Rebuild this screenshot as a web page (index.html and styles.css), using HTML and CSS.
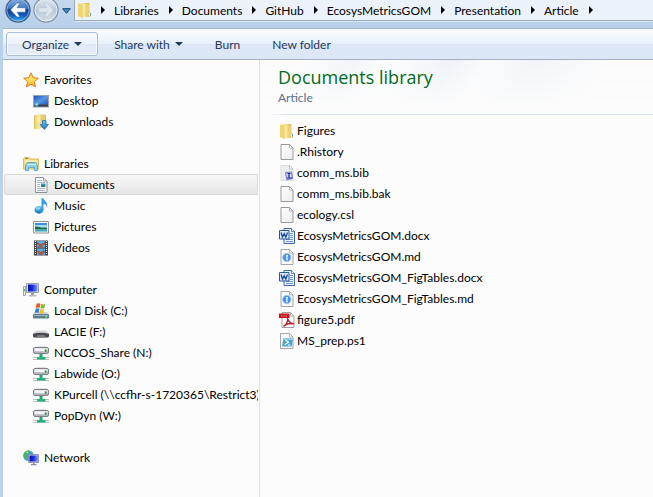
FILE: index.html
```html
<!DOCTYPE html>
<html lang="en">
<head>
<meta charset="utf-8">
<title>Documents library</title>
<link rel="stylesheet" href="styles.css">
</head>
<body>
<svg class="defs" aria-hidden="true">
  <defs>
    <linearGradient id="g-folder" x1="0" y1="0" x2="1" y2="0"><stop offset="0" stop-color="#eccf68"/><stop offset=".6" stop-color="#f7e694"/><stop offset="1" stop-color="#f2dc84"/></linearGradient>
    <linearGradient id="g-blue" x1="0" y1="0" x2="0" y2="1"><stop offset="0" stop-color="#6fc6f3"/><stop offset="1" stop-color="#1474bd"/></linearGradient>
    <linearGradient id="g-star" x1="0" y1="0" x2="0" y2="1"><stop offset="0" stop-color="#ffd27a"/><stop offset=".5" stop-color="#ffe45e"/><stop offset="1" stop-color="#f6a12c"/></linearGradient>
    <linearGradient id="g-desk" x1="0" y1="0" x2="1" y2="1"><stop offset="0" stop-color="#1f4fb0"/><stop offset=".5" stop-color="#5b97e6"/><stop offset="1" stop-color="#2458bd"/></linearGradient>
    <linearGradient id="g-screen" x1="0" y1="0" x2="1" y2="0"><stop offset="0" stop-color="#0a0fa8"/><stop offset=".5" stop-color="#1d2fe0"/><stop offset="1" stop-color="#7fa2f4"/></linearGradient>
    <linearGradient id="g-metal" x1="0" y1="0" x2="0" y2="1"><stop offset="0" stop-color="#f2f2f4"/><stop offset="1" stop-color="#a9abb2"/></linearGradient>
    <linearGradient id="g-page" x1="0" y1="0" x2="1" y2="1"><stop offset="0" stop-color="#ffffff"/><stop offset="1" stop-color="#ececec"/></linearGradient>
    <linearGradient id="g-back" x1="0" y1="0" x2="0" y2="1"><stop offset="0" stop-color="#8db4e2"/><stop offset=".42" stop-color="#3f77c4"/><stop offset=".5" stop-color="#0c3c94"/><stop offset=".75" stop-color="#1560c0"/><stop offset="1" stop-color="#3fc5f8"/></linearGradient>
    <linearGradient id="g-fwd" x1="0" y1="0" x2="0" y2="1"><stop offset="0" stop-color="#e4ebf3"/><stop offset=".5" stop-color="#b9c8d9"/><stop offset="1" stop-color="#d5e0ec"/></linearGradient>
  </defs>

  <symbol id="i-folder" viewBox="0 0 16 16">
    <path d="M1 1.500h5v13.800l-5-.8z" fill="#efd673"/>
    <path d="M6 1h6.500v9l1.500.800V14l-1 .800H6z" fill="#e2c45e"/>
    <path d="M4 3l4-2v13.500L5.500 16 4 15.500z" fill="url(#g-folder)"/><path d="M7.500 1.500h1v13l-1 .6z" fill="#f9efb4"/>
    <path d="M9 2.500h3v11H9z" fill="#ead379"/><path d="M12 11h1v3h-1z" fill="#fbf6d8"/><path d="M13 11h1v2.500h-1z" fill="#5fa5cf"/>
  </symbol>
  <symbol id="i-star" viewBox="0 0 16 16">
    <path d="M8 .8l2.100 4.900 5.200.5-3.900 3.500 1.200 5.200L8 12.200l-4.600 2.700 1.200-5.200L.7 6.200l5.200-.5z" fill="url(#g-star)" stroke="#e07a1c" stroke-linejoin="round"/>
  </symbol>
  <symbol id="i-desktop" viewBox="0 0 16 16">
    <path d="M0 2h16v12.500H0z" fill="#9aa5b4"/><path d="M1 3h14v8.500H1z" fill="url(#g-desk)"/>
    <path d="M1 11.500h14v2H1z" fill="#20242e"/><path d="M6 11.500h9v1H6z" fill="#4b5a70"/>
    <circle cx="3.500" cy="11.500" r="2.200" fill="#3ba3e8"/><path d="M2.500 11h1v-1h1v2h-2z" fill="#f7e06a"/>
  </symbol>
  <symbol id="i-downloads" viewBox="0 0 16 16">
    <path d="M1 1h6v14H1z" fill="#f0da7e"/><path d="M1 1h1v14H1z" fill="#d9bf6a"/>
    <path d="M6 .5h7V14H6z" fill="#e6cd74"/><path d="M12 1h1v13h-1z" fill="#d9bd62"/>
    <path d="M4 3L7.500 .5v14.500L5 16z" fill="#f7e9a4"/>
    <path d="M9.500 6.500h3.500v4h2.500L11.300 15.500 7 10.500h2.500z" fill="url(#g-blue)" stroke="#1d72b8" stroke-width=".8"/>
  </symbol>
  <symbol id="i-libraries" viewBox="0 0 16 16">
    <path d="M.5 2.500l1-1H6l1 1.500h8.500V13H.5z" fill="#f1dc84" stroke="#d3b24e" stroke-width=".8"/>
    <path d="M1.500 4.500h13v1h-13z" fill="#fff8cf"/><path d="M2 2h3v1H2z" fill="#45b649"/>
    <path d="M2.500 14.500V9.500L4.500 6.500h8l2 3v5h-3v-3H5.500v3z" fill="#8ed0ee" stroke="#4a9cc9" stroke-width=".8"/>
    <path d="M4 8.500h9" stroke="#d4f1fb"/>
  </symbol>
  <symbol id="i-documents" viewBox="0 0 16 16">
    <path d="M2.500.5h8l3.500 3.500v11.500H2.500z" fill="#fff" stroke="#8b8f94"/><path d="M10.500.5V4H14" fill="#e4e6e8" stroke="#8b8f94" stroke-width=".8"/>
    <path d="M4 3.500h5M4 5.500h8M4 7.500h3M4 9.500h3M4 11.500h8M4 13.500h8" stroke="#9db7d6"/>
    <path d="M8 6.500h4.500V10H8z" fill="#3f8fd6"/><path d="M8 9l2-1.200L12.500 10H8z" fill="#2e7d5b"/>
  </symbol>
  <symbol id="i-music" viewBox="0 0 16 16">
    <ellipse cx="6" cy="11.800" rx="4.500" ry="3.900" fill="url(#g-blue)"/>
    <path d="M8.500 12V.3h2c.4 2.700 4.700 3.700 3.700 9.200-.4-2.500-1.900-3.400-3.700-3.800V12z" fill="#3b9bd8"/>
    <ellipse cx="5" cy="10.500" rx="2.200" ry="1.300" fill="#8bd5f5"/>
  </symbol>
  <symbol id="i-pictures" viewBox="0 0 16 16">
    <path d="M.5 2.500h15v11.500H.5z" fill="#fff" stroke="#91979d"/><path d="M2 4h12v8.500H2z" fill="#a8dcf6"/>
    <path d="M2 4h12v2H2z" fill="#3f8edb"/><path d="M2 7.500c4 0 5 1.500 12 1v2H2z" fill="#1c6b4c"/><path d="M2 10.500h12v2H2z" fill="#48a8b4"/>
  </symbol>
  <symbol id="i-videos" viewBox="0 0 16 16">
    <path d="M1 .5h14v15H1z" fill="#3c3f45"/><path d="M4 1h8v6.500H4zM4 8.500h8V15H4z" fill="#5aaee6"/>
    <path d="M4 2l4 2 4-2v2.500L9 6l2 1.500H5L6 5l-2-.5zM4 10l4 2 3-2 1 2-3 3H6z" fill="#a25a4c"/>
    <path d="M2.500 1v14M13.500 1v14" stroke="#fff" stroke-width="1.200" stroke-dasharray="1 1"/>
  </symbol>
  <symbol id="i-computer" viewBox="0 0 16 16">
    <path d="M3.500 1.500h12v9h-12z" fill="#d9dce5" stroke="#9ba0ae"/><path d="M5 2.500h9.500v7H5z" fill="url(#g-screen)"/>
    <path d="M8 11h3v2H8z" fill="#9b9fa8"/><path d="M6 13h7.500v1.500H6z" fill="#b9bcc4"/>
    <path d="M.5 4.500h2v9h-2z" fill="#e8e9ec" stroke="#8d9099" stroke-width=".8"/><path d="M1 7h1v2H1z" fill="#4fc26b"/>
  </symbol>
  <symbol id="i-disk" viewBox="0 0 16 16">
    <path d="M2 9h12l2 2.500H0z" fill="#cdd2d7"/><rect y="11" width="16" height="4.500" rx="1" fill="#5b7d8c"/>
    <path d="M1 12h14v1H1z" fill="#9bb5bf"/><path d="M12.500 13h1.500v1.500h-1.500z" fill="#7af08a"/>
    <path d="M3.500.7C5-.2 6.300.1 7.500.7L6.700 5c-1.200-.6-2.600-.6-4 .2z" fill="#ea5a2c"/>
    <path d="M8.200.9c1.400.7 2.600.6 4-.1L11.400 5c-1.400.7-2.600.7-4 .2z" fill="#7cbb32"/>
    <path d="M2.500 5.900c1.500-.8 2.800-.7 4-.1L5.700 10c-1.200-.6-2.600-.6-4 .2z" fill="#3183d3"/>
    <path d="M7.200 6c1.400.7 2.600.6 4-.1l-.8 4.200c-1.400.7-2.600.7-4 .2z" fill="#f7bb28"/>
  </symbol>
  <symbol id="i-lacie" viewBox="0 0 16 16">
    <path d="M3 6.500h10l3 3.500H0z" fill="#d6d6d9"/><path d="M0 9.800Q8 7.800 16 9.800V12q0 1.500-1.500 1.500h-13Q0 13.500 0 12z" fill="#4a4a4e"/>
    <path d="M3 13.500L4.500 11h7l1.500 2.500z" fill="#77777c"/>
  </symbol>
  <symbol id="i-netdrive" viewBox="0 0 16 16">
    <path d="M3 1h10l2.500 3H.5z" fill="#e1e1e4"/><rect x=".5" y="2.500" width="15" height="6" rx="1.500" fill="url(#g-metal)" stroke="#7f8086"/>
    <path d="M2 4h9v2H2z" fill="#f6f6f8"/><path d="M12 4.500h1.500v2.500H12z" fill="#2da43a"/><path d="M6.500 9h3v3.500h-3z" fill="#1fa873"/>
    <path d="M0 12.500h16M0 14.500h16" stroke="#b9bebe"/><path d="M4 12h8.500v2.500H4z" fill="#23b47c"/>
  </symbol>
  <symbol id="i-network" viewBox="0 0 16 16">
    <circle cx="5.500" cy="5.800" r="5.300" fill="#3c9fe0"/><path d="M2 2c2-1.800 4-1.700 5-1L5 4 3 5 4 8 2.500 9.500C.2 7 0 4 2 2zM8 1.500l2.500 2L8 4z" fill="#46b84a"/>
    <path d="M3 2.500l2-1v2z" fill="#d3f0cf"/>
    <path d="M5.500 4.500h10v8h-10z" fill="#c8cee0" stroke="#7d86a8" stroke-width=".8"/><path d="M6.500 5.500H15v6H6.500z" fill="url(#g-screen)"/>
    <path d="M10 12.500h1.500V14H10zM8 14h5.500v1.200H8z" fill="#8c92a3"/>
  </symbol>
  <symbol id="i-file" viewBox="0 0 16 16">
    <path d="M2 .5h8.500L14 4v11.500H2z" fill="url(#g-page)" stroke="#9a9a9a"/><path d="M10.500.5V4H14z" fill="#fff" stroke="#9a9a9a" stroke-width=".8"/>
  </symbol>
  <symbol id="i-bib" viewBox="0 0 16 16">
    <path d="M2 .5h8.500L14 4v11.500H2z" fill="#eeeeef" stroke="#d4d4d4" stroke-width=".8"/><path d="M10.500.5V4H14z" fill="#fff" stroke="#b4b4b4" stroke-width=".8"/>
    <path d="M6.500 7.500l6-.5 1.200 6.500-6 1.300z" fill="#c9cff0" stroke="#5a63b4" stroke-width=".8"/>
    <path d="M8.500 8.500h3M10 8.500v4M8 13h5" stroke="#1e2a9c" stroke-width="1.200"/>
  </symbol>
  <symbol id="i-word" viewBox="0 0 16 16">
    <path d="M5 .5h7.500l3 3v12H5z" fill="#eef4fc" stroke="#3d66a8"/><path d="M12.500.5v3h3" fill="#fff" stroke="#3d66a8" stroke-width=".8"/>
    <path d="M11 5.500h3M11 7.500h3M11 9.500h3M7 11.500h7M7 13.500h7" stroke="#6f95cc"/>
    <path d="M.5 2.500h9.500v8.500H.5z" fill="#dfeafa" stroke="#2b569a"/>
    <path d="M2 4.500l1.500 4.700L5.200 5.500l1.600 3.700 1.700-4.700" fill="none" stroke="#1d4b9b" stroke-width="1.300"/>
  </symbol>
  <symbol id="i-md" viewBox="0 0 16 16">
    <path d="M2 .5h8.500L14 4v11.500H2z" fill="#fafafa" stroke="#a4a4a4"/><path d="M10.500.5V4H14z" fill="#fff" stroke="#a4a4a4" stroke-width=".8"/>
    <circle cx="7.800" cy="8.500" r="4.200" fill="#4a92e4" stroke="#a9cdf3"/><path d="M7 6h2v1l-.4.500v3H9v.8H6.900v-.8h.4v-3h-.3z" fill="#e8f3ff"/>
  </symbol>
  <symbol id="i-pdf" viewBox="0 0 16 16">
    <path d="M3 .5h8.500L15 4v11.500H3z" fill="#fbfafa" stroke="#a2a2a2"/><path d="M11.500.5V4H15z" fill="#fff" stroke="#a2a2a2" stroke-width=".8"/>
    <path d="M0 1.500h10.500v4.500H0z" fill="#c4161c"/><path d="M2 3.900h6" stroke="#e58a8a" stroke-dasharray="1.500 .8"/>
    <path d="M5 14c2-1 4.200-4.600 3.600-7.200C10 10 11.500 11.500 14.500 11.800 10.500 11 7.500 11.800 5 14z" fill="none" stroke="#b71c22" stroke-width="1.400" stroke-linejoin="round"/>
  </symbol>
  <symbol id="i-ps1" viewBox="0 0 16 16">
    <path d="M1.500.5h9L14 4v11.500H1.500z" fill="#f8f8f8" stroke="#a4a4a4"/><path d="M10.500.5V4H14z" fill="#fff" stroke="#a4a4a4" stroke-width=".8"/>
    <path d="M4.500 5h9.500l-1.200 8.500H3z" fill="#4aa5cf"/><path d="M4.500 5h9.500l-.3 2H4.200z" fill="#8cd0e8"/>
    <path d="M6.500 7l3 2.300-3.700 2.500M9 12h2.500" fill="none" stroke="#fff" stroke-width="1.200"/>
  </symbol>
</svg>

<header class="address-row">
  <button class="round" aria-label="Back">
    <svg viewBox="0 0 26 26" aria-hidden="true"><circle cx="13" cy="13" r="12" fill="url(#g-back)" stroke="#47648c" stroke-width="1.400"/><circle cx="13" cy="13" r="11" fill="none" stroke="#a9d3f4" stroke-opacity=".55"/><path d="M5.500 13L12 6h3l-2.800 4.800h8.300v4.400h-8.300L15 20h-3z" fill="#fff" stroke="#2b5791" stroke-width=".5"/></svg>
  </button>
  <button class="round" aria-label="Forward">
    <svg viewBox="0 0 26 26" aria-hidden="true"><circle cx="13" cy="13" r="12" fill="url(#g-fwd)" stroke="#8798ac" stroke-width="1.400"/><circle cx="13" cy="13" r="11" fill="none" stroke="#eef4fa" stroke-opacity=".8"/><path d="M20.500 13L14 6h-3l2.800 4.800H5.500v4.400h8.300L11 20h3z" fill="#dde6ef" stroke="#b0becd" stroke-width=".5"/></svg>
  </button>
  <button class="recent" aria-label="Recent pages">
    <svg viewBox="0 0 9 6" aria-hidden="true"><path d="M.7.700h7.600L4.500 5.300z" fill="#3c8fce" stroke="#173f77"/></svg>
  </button>
  <nav class="address" aria-label="Address">
    <svg class="icon" aria-hidden="true"><use href="#i-folder"/></svg>
    <ol class="crumbs">
      <li><a href="#">Libraries</a></li>
      <li><a href="#">Documents</a></li>
      <li><a href="#">GitHub</a></li>
      <li><a href="#">EcosysMetricsGOM</a></li>
      <li><a href="#">Presentation</a></li>
      <li class="last"><a href="#">Article</a></li>
    </ol>
  </nav>
</header>

<div class="window">
  <div class="toolbar">
    <button class="tool tool-active">Organize <span class="caret"></span></button>
    <button class="tool">Share with <span class="caret"></span></button>
    <button class="tool">Burn</button>
    <button class="tool">New folder</button>
  </div>
  <div class="panes">
    <nav class="sidebar" aria-label="Navigation pane">
      <section class="group">
        <a class="row" href="#"><svg class="icon" aria-hidden="true"><use href="#i-star"/></svg><span>Favorites</span></a>
        <a class="row child" href="#"><svg class="icon" aria-hidden="true"><use href="#i-desktop"/></svg><span>Desktop</span></a>
        <a class="row child" href="#"><svg class="icon" aria-hidden="true"><use href="#i-downloads"/></svg><span>Downloads</span></a>
      </section>
      <section class="group">
        <a class="row" href="#"><svg class="icon" aria-hidden="true"><use href="#i-libraries"/></svg><span>Libraries</span></a>
        <a class="row child selected" href="#" aria-current="page"><svg class="icon" aria-hidden="true"><use href="#i-documents"/></svg><span>Documents</span></a>
        <a class="row child" href="#"><svg class="icon" aria-hidden="true"><use href="#i-music"/></svg><span>Music</span></a>
        <a class="row child" href="#"><svg class="icon" aria-hidden="true"><use href="#i-pictures"/></svg><span>Pictures</span></a>
        <a class="row child" href="#"><svg class="icon" aria-hidden="true"><use href="#i-videos"/></svg><span>Videos</span></a>
      </section>
      <section class="group">
        <a class="row" href="#"><svg class="icon" aria-hidden="true"><use href="#i-computer"/></svg><span>Computer</span></a>
        <a class="row child" href="#"><svg class="icon" aria-hidden="true"><use href="#i-disk"/></svg><span>Local Disk (C:)</span></a>
        <a class="row child" href="#"><svg class="icon" aria-hidden="true"><use href="#i-lacie"/></svg><span>LACIE (F:)</span></a>
        <a class="row child" href="#"><svg class="icon" aria-hidden="true"><use href="#i-netdrive"/></svg><span>NCCOS_Share (N:)</span></a>
        <a class="row child" href="#"><svg class="icon" aria-hidden="true"><use href="#i-netdrive"/></svg><span>Labwide (O:)</span></a>
        <a class="row child" href="#"><svg class="icon" aria-hidden="true"><use href="#i-netdrive"/></svg><span>KPurcell (\\ccfhr-s-1720365\Restrict3) (</span></a>
        <a class="row child" href="#"><svg class="icon" aria-hidden="true"><use href="#i-netdrive"/></svg><span>PopDyn (W:)</span></a>
      </section>
      <section class="group">
        <a class="row" href="#"><svg class="icon" aria-hidden="true"><use href="#i-network"/></svg><span>Network</span></a>
      </section>
    </nav>
    <main class="content">
      <div class="library-head">
        <h1>Documents library</h1>
        <p>Article</p>
      </div>
      <div class="files">
        <a class="file" href="#"><svg class="icon" aria-hidden="true"><use href="#i-folder"/></svg><span>Figures</span></a>
        <a class="file" href="#"><svg class="icon" aria-hidden="true"><use href="#i-file"/></svg><span>.Rhistory</span></a>
        <a class="file" href="#"><svg class="icon" aria-hidden="true"><use href="#i-bib"/></svg><span>comm_ms.bib</span></a>
        <a class="file" href="#"><svg class="icon" aria-hidden="true"><use href="#i-file"/></svg><span>comm_ms.bib.bak</span></a>
        <a class="file" href="#"><svg class="icon" aria-hidden="true"><use href="#i-file"/></svg><span>ecology.csl</span></a>
        <a class="file" href="#"><svg class="icon" aria-hidden="true"><use href="#i-word"/></svg><span>EcosysMetricsGOM.docx</span></a>
        <a class="file" href="#"><svg class="icon" aria-hidden="true"><use href="#i-md"/></svg><span>EcosysMetricsGOM.md</span></a>
        <a class="file" href="#"><svg class="icon" aria-hidden="true"><use href="#i-word"/></svg><span>EcosysMetricsGOM_FigTables.docx</span></a>
        <a class="file" href="#"><svg class="icon" aria-hidden="true"><use href="#i-md"/></svg><span>EcosysMetricsGOM_FigTables.md</span></a>
        <a class="file" href="#"><svg class="icon" aria-hidden="true"><use href="#i-pdf"/></svg><span>figure5.pdf</span></a>
        <a class="file" href="#"><svg class="icon" aria-hidden="true"><use href="#i-ps1"/></svg><span>MS_prep.ps1</span></a>
      </div>
    </main>
  </div>
</div>
</body>
</html>
```
FILE: styles.css
```css
* { box-sizing: border-box; }

body {
  margin: 0;
  min-height: 100vh;
  display: flex;
  flex-direction: column;
  overflow: hidden;
  background: #b9d1ea;
  color: #000;
  font: 12px/21px "Segoe UI", Lato, sans-serif;
}

.defs { position: absolute; width: 0; height: 0; }

a { color: inherit; text-decoration: none; white-space: nowrap; }

button {
  padding: 0;
  border: 0;
  background: none;
  color: inherit;
  font: inherit;
}

.icon { flex: none; width: 16px; height: 16px; }

/* Address bar */
.address-row {
  display: flex;
  align-items: flex-start;
  height: 28px;
  padding-left: 5px;
  background: linear-gradient(#c4d8ee, #b7cfe8);
}

.round { flex: none; width: 26px; height: 26px; margin: -3px 2px 0 0; }
.round svg { display: block; width: 26px; height: 26px; }

.recent { flex: none; width: 9px; margin: 8px 3px 0 1px; line-height: 0; }
.recent svg { width: 9px; height: 6px; }

.address {
  flex: 1;
  display: flex;
  align-items: center;
  min-width: 0;
  height: 21px;
  padding-left: 2px;
  border: solid #99abbf;
  border-width: 0 0 1px 1px;
  box-shadow: 0 1px 0 #d8e5f2;
  background: #ebf2fa;
}

.crumbs {
  display: flex;
  margin: 0;
  padding: 0 0 0 8px;
  list-style: none;
}

.crumbs li { display: flex; align-items: center; padding-right: 10px; }

.crumbs li::before,
.crumbs .last::after {
  content: "";
  border: solid transparent;
  border-width: 4px 0 4px 4px;
  border-left-color: #000;
}
.crumbs li::before { margin-right: 9px; }
.crumbs .last::after { margin-left: 10px; }

/* Command bar */
.window {
  flex: 1;
  display: flex;
  flex-direction: column;
  margin-left: 3px;
  background: #fcfcfc;
}

.toolbar {
  display: flex;
  align-items: center;
  height: 32px;
  padding-left: 3px;
  border-top: 1px solid #9fb8d5;
  border-bottom: 1px solid #a0afc3;
  background: linear-gradient(#fbfdff, #e6f0fa 50%, #dce6f4 50%, #dde8f6);
  color: #1e395b;
}

.tool {
  display: flex;
  align-items: center;
  gap: 5px;
  height: 24px;
  padding: 0 15px;
  border: 1px solid transparent;
  border-radius: 3px;
  white-space: nowrap;
}

.tool-active {
  border-color: #a9bfd9;
  background: linear-gradient(#f8fbfe, #eaf1fa 50%, #dfe9f5 50%, #e6eef8);
  box-shadow: inset 0 0 0 1px #f6faff;
}

.caret {
  border: solid transparent;
  border-width: 4px 4px 0;
  border-top-color: #1e395b;
}

/* Panes */
.panes { flex: 1; display: flex; }

.sidebar {
  flex: none;
  width: 257px;
  padding: 9px 1px 0;
  border-right: 1px solid #d6e5f5;
}

.group { margin-bottom: 21px; }

.row {
  display: flex;
  align-items: center;
  gap: 5px;
  height: 21px;
  padding-left: 19px;
  overflow: hidden;
}

.child { padding-left: 29px; }

.selected {
  border-radius: 3px 0 0 3px;
  box-shadow: inset 0 0 0 1px #d9d9d9;
  background: linear-gradient(#f8f8f8, #e5e5e5);
}

.content { flex: 1; min-width: 0; }

.library-head {
  height: 55px;
  margin-bottom: 5px;
  padding: 5px 0 0 18px;
  border-bottom: 1px solid #d5e1ef;
  border-image: linear-gradient(90deg, #fcfcfc 8px, #d5e1ef 30px) 1;
  background:
    linear-gradient(rgba(252, 252, 252, 0), #fcfcfc 90%),
    linear-gradient(115deg, #fcfcfc 10%, #f1f5fa 22%, #fafcfe 30%, #f8fafd 36%, #edf2f8 46%, #fafbfd 54%, #f0f4f9 66%, #fcfcfc 85%);
}

.library-head h1 {
  margin: 0;
  color: #036b1c;
  font-family: "Segoe UI", "Open Sans", sans-serif;
  font-size: 18px;
  font-weight: 400;
  line-height: 24px;
}

.library-head p { margin: 0; color: #5d6f8c; line-height: 18px; }

.file {
  display: flex;
  align-items: center;
  gap: 2px;
  height: 21px;
  padding-left: 19px;
}
```
